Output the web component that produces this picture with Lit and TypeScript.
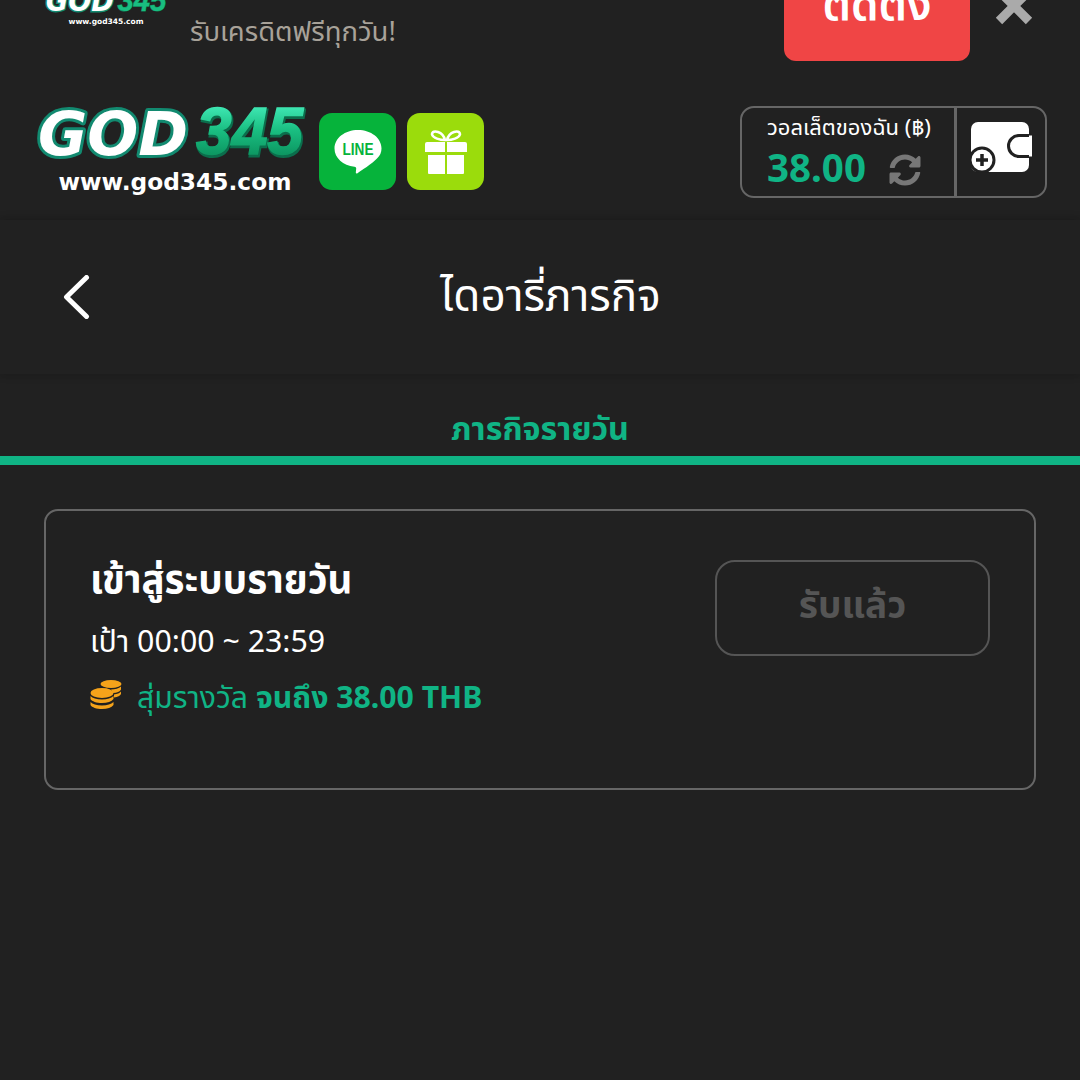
import { LitElement, html, css } from "lit";
import { customElement } from "lit/decorators.js";

@customElement("app-root")
export class AppRoot extends LitElement {
  static styles = css`
    :host { display: block; width: 1080px; height: 1080px; background: #212121; overflow: hidden; font-family: "Noto Sans", "Noto Sans Thai", "Open Sans", sans-serif; color: #fff; }
    .banner { height: 90px; display: flex; align-items: flex-start; overflow: hidden; position: relative; }
    .banner-logo { width: 190px; height: 27px; display: flex; flex-direction: column; align-items: center; justify-content: flex-end; flex: none; padding-left: 22px; box-sizing: border-box; overflow: hidden; }
    .banner-logo svg { display: block; flex: none; margin-top: -13px; }
    .mini-url { font: 700 7.5px/10px "DejaVu Sans", sans-serif; margin-top: 1px; }
    .promo { margin-top: 13px; font-size: 27.500px; line-height: 36px; color: #a8a299; width: 594px; flex: none; }
    .install { width: 186px; height: 61px; background: #f04545; border-radius: 0 0 12px 12px; flex: none; display: flex; align-items: flex-end; justify-content: center; overflow: hidden; font-size: 44px; font-weight: 600; line-height: 50px; }
    .install span { display: block; margin-bottom: 33px; }
    .close { margin-left: 25px; margin-top: -5px; width: 38px; height: 30px; flex: none; }

    .header { height: 130px; display: flex; align-items: flex-start; padding: 16px 33px 0 36px; box-sizing: border-box; }
    .logo { width: 270px; flex: none; display: flex; flex-direction: column; align-items: center; }
    .logo svg { display: block; }
    .url { font: 700 23.300px/28px "DejaVu Sans", sans-serif; margin: 6px 0 0 8px; }
    .tile { width: 77px; height: 77px; border-radius: 13px; flex: none; margin-top: 7px; display: flex; align-items: center; justify-content: center; }
    .line { background: #06b33b; margin-left: 13px; }
    .gift { background: #9bdc0c; margin-left: 11px; }
    .wallet { margin-left: auto; width: 307px; height: 92px; border: 2px solid #666; border-radius: 14px; box-sizing: border-box; display: flex; }
    .w-left { width: 215px; border-right: 3px solid #666; box-sizing: border-box; flex: none; display: flex; flex-direction: column; align-items: flex-start; padding-left: 25px; }
    .w-label { font-size: 22px; line-height: 24px; margin-top: 6px; white-space: nowrap; }
    .w-row { display: flex; align-items: center; gap: 23px; margin-top: 4px; }
    .w-val { font-size: 38.500px; font-weight: 700; line-height: 50px; color: #10b485; }
    .w-row svg { margin-top: 5px; }
    .w-right { flex: 1; display: flex; align-items: flex-start; justify-content: center; padding-top: 13px; }

    .titlebar { height: 154px; display: flex; align-items: center; padding-left: 63px; box-shadow: 0 -2px 8px rgba(0,0,0,.12), 0 2px 8px rgba(0,0,0,.12); position: relative; }
    .back { flex: none; width: 28px; height: 44px; }
    .title { flex: 1; text-align: center; font-size: 44px; line-height: 60px; padding-right: 70px; margin-bottom: 6px; }

    .tab { height: 91px; box-sizing: border-box; border-bottom: 9px solid #10b485; text-align: center; color: #10b485; font-size: 32.300px; font-weight: 700; line-height: 40px; padding-top: 33px; }

    .card { margin: 44px 44px 0; height: 281px; box-sizing: border-box; border: 2px solid #666; border-radius: 14px; padding: 49px 44px 0 44px; display: flex; justify-content: space-between; align-items: flex-start; }
    .c-title { font-size: 38.500px; font-weight: 700; line-height: 44px; margin-top: -4px; }
    .c-time { font-size: 30.300px; line-height: 40px; margin-top: 21px; }
    .c-reward { display: flex; align-items: center; gap: 15px; margin-top: 16px; font-size: 30.200px; line-height: 40px; color: #10b485; }
    .c-reward svg { margin-top: -4px; }
    .c-reward b { font-weight: 700; }
    .done { width: 275px; height: 96px; box-sizing: border-box; border: 2px solid #555; border-radius: 20px; padding-bottom: 4px; display: flex; align-items: center; justify-content: center; color: #555; font-size: 37px; font-weight: 700; }
  `;

  render() {
    return html`
      <div class="banner">
        <div class="banner-logo">
          <svg width="124" height="30" viewBox="0 0 270 56">
            <text x="4" y="50" font-family="DejaVu Sans" font-weight="700" font-style="italic" font-size="60" fill="#fff" stroke="#128a70" stroke-width="6" paint-order="stroke" textLength="148" lengthAdjust="spacingAndGlyphs">GOD</text>
            <text x="160" y="50" font-family="Liberation Sans" font-weight="700" font-style="italic" font-size="67" fill="#19bd80" stroke="#0c8a5a" stroke-width="2" paint-order="stroke" textLength="106" lengthAdjust="spacingAndGlyphs">345</text>
          </svg>
          <div class="mini-url">www.god345.com</div>
        </div>
        <div class="promo">รับเครดิตฟรีทุกวัน!</div>
        <div class="install"><span>ติดตั้ง</span></div>
        <svg class="close" viewBox="0 0 38 30"><path d="M4 -4 L34 26 M34 -4 L4 26" stroke="#aaa" stroke-width="9" fill="none"/></svg>
      </div>

      <div class="header">
        <div class="logo">
          <svg width="270" height="56" viewBox="0 0 270 56">
            <defs>
              <linearGradient id="g345" gradientUnits="userSpaceOnUse" x1="0" y1="0" x2="0" y2="50">
                <stop offset="0" stop-color="#3fe8b4"/><stop offset=".5" stop-color="#19bd80"/><stop offset="1" stop-color="#0c9560"/>
              </linearGradient>
            </defs>
            <text x="2" y="49" font-family="DejaVu Sans" font-weight="700" font-style="italic" font-size="60" fill="#fff" stroke="#128a70" stroke-width="6" stroke-linejoin="round" paint-order="stroke" textLength="150" lengthAdjust="spacingAndGlyphs">GOD</text>
            <text x="161" y="50" font-family="Liberation Sans" font-weight="700" font-style="italic" font-size="67" fill="#0b6e4c" stroke="#0b6e4c" stroke-width="3" textLength="107" lengthAdjust="spacingAndGlyphs">345</text>
            <text x="160" y="48" font-family="Liberation Sans" font-weight="700" font-style="italic" font-size="67" fill="url(#g345)" stroke="url(#g345)" stroke-width="1.500" textLength="107" lengthAdjust="spacingAndGlyphs">345</text>
          </svg>
          <div class="url">www.god345.com</div>
        </div>
        <div class="tile line">
          <svg width="48" height="46" viewBox="0 0 48 46">
            <path d="M24 1C11 1 .5 9 .5 19.500c0 9.500 8.500 17 20 18.300 1 .2 1.700.7 1.700 1.700l-.4 4c0 1 .8 1.300 1.700.7C27 41.500 38 35 43 29.500 46 26.500 47.500 23.500 47.500 19.500 47.500 9 37 1 24 1z" fill="#fff"/>
            <text x="24" y="25.500" text-anchor="middle" font-family="Liberation Sans" font-weight="700" font-size="17" fill="#06b33b" textLength="31" lengthAdjust="spacingAndGlyphs">LINE</text>
          </svg>
        </div>
        <div class="tile gift">
          <svg width="44" height="44" viewBox="0 0 44 44">
            <path d="M21 10C16 10 9 8 8 4.500 8 1.500 11 1 14 2c3 1 6 4 7 8zM23 10c5 0 12-2 13-5.500C36 1.500 33 1 30 2c-3 1-6 4-7 8z" fill="none" stroke="#fff" stroke-width="2.500"/>
            <path d="M3 12h18v10H1V14a2 2 0 0 1 2-2zM23 12h18a2 2 0 0 1 2 2v8H23zM4 25h17v19H5a1 1 0 0 1-1-1zM23 25h17v18a1 1 0 0 1-1 1H23z" fill="#fff"/>
          </svg>
        </div>
        <div class="wallet">
          <div class="w-left">
            <div class="w-label">วอลเล็ตของฉัน (฿)</div>
            <div class="w-row">
              <div class="w-val">38.00</div>
              <svg width="32" height="32" viewBox="0 0 512 512" fill="#777"><path d="M370.72 133.28C339.458 104.008 298.888 87.962 255.848 88c-77.458.068-144.328 53.178-162.791 126.85-1.344 5.363-6.122 9.15-11.651 9.15H24.103c-7.498 0-13.194-6.807-11.807-14.176C33.933 94.924 134.813 8 256 8c66.448 0 126.791 26.136 171.315 68.685L463.03 40.97C478.149 25.851 504 36.559 504 57.941V192c0 13.255-10.745 24-24 24H345.941c-21.382 0-32.09-25.851-16.971-40.971l41.75-41.749zM32 296h134.059c21.382 0 32.09 25.851 16.971 40.971l-41.75 41.75c31.262 29.273 71.835 45.319 114.876 45.28 77.418-.07 144.315-53.144 162.787-126.849 1.344-5.363 6.122-9.15 11.651-9.15h57.304c7.498 0 13.194 6.807 11.807 14.176C478.067 417.076 377.187 504 256 504c-66.448 0-126.791-26.136-171.315-68.685L48.97 471.03C33.851 486.149 8 475.441 8 454.059V320c0-13.255 10.745-24 24-24z"/></svg>
            </div>
          </div>
          <div class="w-right">
            <svg width="62" height="52" viewBox="0 0 62 52">
              <rect x="1" y="1" width="58" height="50" rx="7" fill="#fff"/>
              <path d="M62 14.500H49a10.500 10.500 0 0 0 0 21h13z" fill="#fff"/>
              <path d="M59 14.500H49a10.500 10.500 0 0 0 0 21h10" fill="none" stroke="#212121" stroke-width="3"/>
              <circle cx="12" cy="39" r="12" fill="#fff" stroke="#212121" stroke-width="3"/>
              <path d="M12 33v12M6 39h12" stroke="#212121" stroke-width="3.500"/>
            </svg>
          </div>
        </div>
      </div>

      <div class="titlebar">
        <svg class="back" viewBox="0 0 28 44"><path d="M23.500 2.500 L3.500 22 L23.500 41.500" fill="none" stroke="#fff" stroke-width="5" stroke-linecap="round" stroke-linejoin="round"/></svg>
        <div class="title">ไดอารี่ภารกิจ</div>
      </div>

      <div class="tab">ภารกิจรายวัน</div>

      <div class="card">
        <div>
          <div class="c-title">เข้าสู่ระบบรายวัน</div>
          <div class="c-time">เป้า 00:00 ~ 23:59</div>
          <div class="c-reward">
            <svg width="32" height="32" viewBox="0 0 32 32">
              <g fill="#f5a31a">
                <ellipse cx="21" cy="5" rx="10.500" ry="4"/>
                <path d="M21 10.500c4 0 8-1 10-3v3c-1 2-4 3.500-8 3.500zM24 15.500c3-.3 6-1.500 7-3v2.500c-1 2-3 3-7 3.500z"/>
                <ellipse cx="12" cy="14" rx="11.500" ry="5"/>
                <path d="M.5 17c2 2 6 3.500 11.500 3.500S21 19 23.500 17v3c-2 2.500-6 4-11.500 4S2 22.500.5 20zM.5 23c2 2 6 3.500 11.500 3.500S21 25 23.500 23v3c-2 2.500-6 4-11.500 4S2 28.500.5 26z"/>
              </g>
            </svg>
            <span>สุ่มรางวัล <b>จนถึง 38.00 THB</b></span>
          </div>
        </div>
        <div class="done">รับแล้ว</div>
      </div>
    `;
  }
}
